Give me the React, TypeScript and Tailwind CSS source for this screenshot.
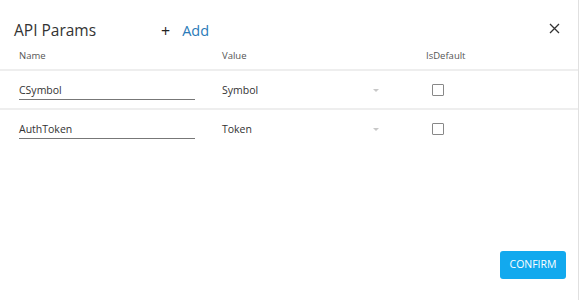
import React from "react";

const rows = [
  { name: "CSymbol", value: "Symbol" },
  { name: "AuthToken", value: "Token" },
];

export default function App() {
  return (
    <div
      className="w-[579px] h-[300px] bg-white relative overflow-hidden border-r border-[#e0e0e0] flex flex-col"
      style={{ fontFamily: '"Open Sans", "Noto Sans", sans-serif' }}
    >
      <div className="flex items-center h-[44px] pt-[17px] pl-[14px] pr-[18px]">
        <div className="text-[15.5px] text-[#333] w-[147px]">API Params</div>
        <div className="flex items-center">
          <span className="text-[16px] text-[#222] mr-[12px] leading-none">+</span>
          <span className="text-[14.5px] text-[#2b7bb9]">Add</span>
        </div>
        <div className="flex-1" />
        <svg width="11" height="11" viewBox="0 0 11 11" className="mt-[-4px]">
          <path d="M1 1L10 10M10 1L1 10" stroke="#333" strokeWidth="1.3" />
        </svg>
      </div>
      <div className="flex items-end h-[27px] pb-[6px] text-[9.5px] text-[#555] border-b-2 border-[#eeeeee]">
        <div className="pl-[19px] w-[222px]">Name</div>
        <div className="w-[204px]">Value</div>
        <div>IsDefault</div>
      </div>
      {rows.map((r, i) => (
        <div
          key={r.name}
          className={
            i < rows.length - 1
              ? "flex items-center h-[39px] pt-[2px] border-b-2 border-[#eeeeee]"
              : "flex items-center h-[39px] pt-[2px] border-b-2 border-transparent"
          }
        >
          <div className="pl-[19px] w-[222px]">
            <div className="w-[176px] border-b border-[#777] text-[10.5px] text-[#333] pb-[1px] pt-[2px]">
              {r.name}
            </div>
          </div>
          <div className="w-[210px] flex items-center text-[10.5px] text-[#333]">
            <span className="w-[151px]">{r.value}</span>
            <svg width="6" height="4" viewBox="0 0 6 4">
              <path d="M0 0L6 0L3 3Z" fill="#c8c8c8" />
            </svg>
          </div>
          <div className="w-[12px] h-[12px] border border-[#888] rounded-[1px] mt-[-2px]" />
        </div>
      ))}
      <div className="flex-1" />
      <div className="flex justify-end pr-[12px] pb-[21px]">
        <button className="w-[66px] h-[28px] rounded-[3px] bg-[#12a9ee] text-white text-[10.5px]">
          CONFIRM
        </button>
      </div>
    </div>
  );
}
